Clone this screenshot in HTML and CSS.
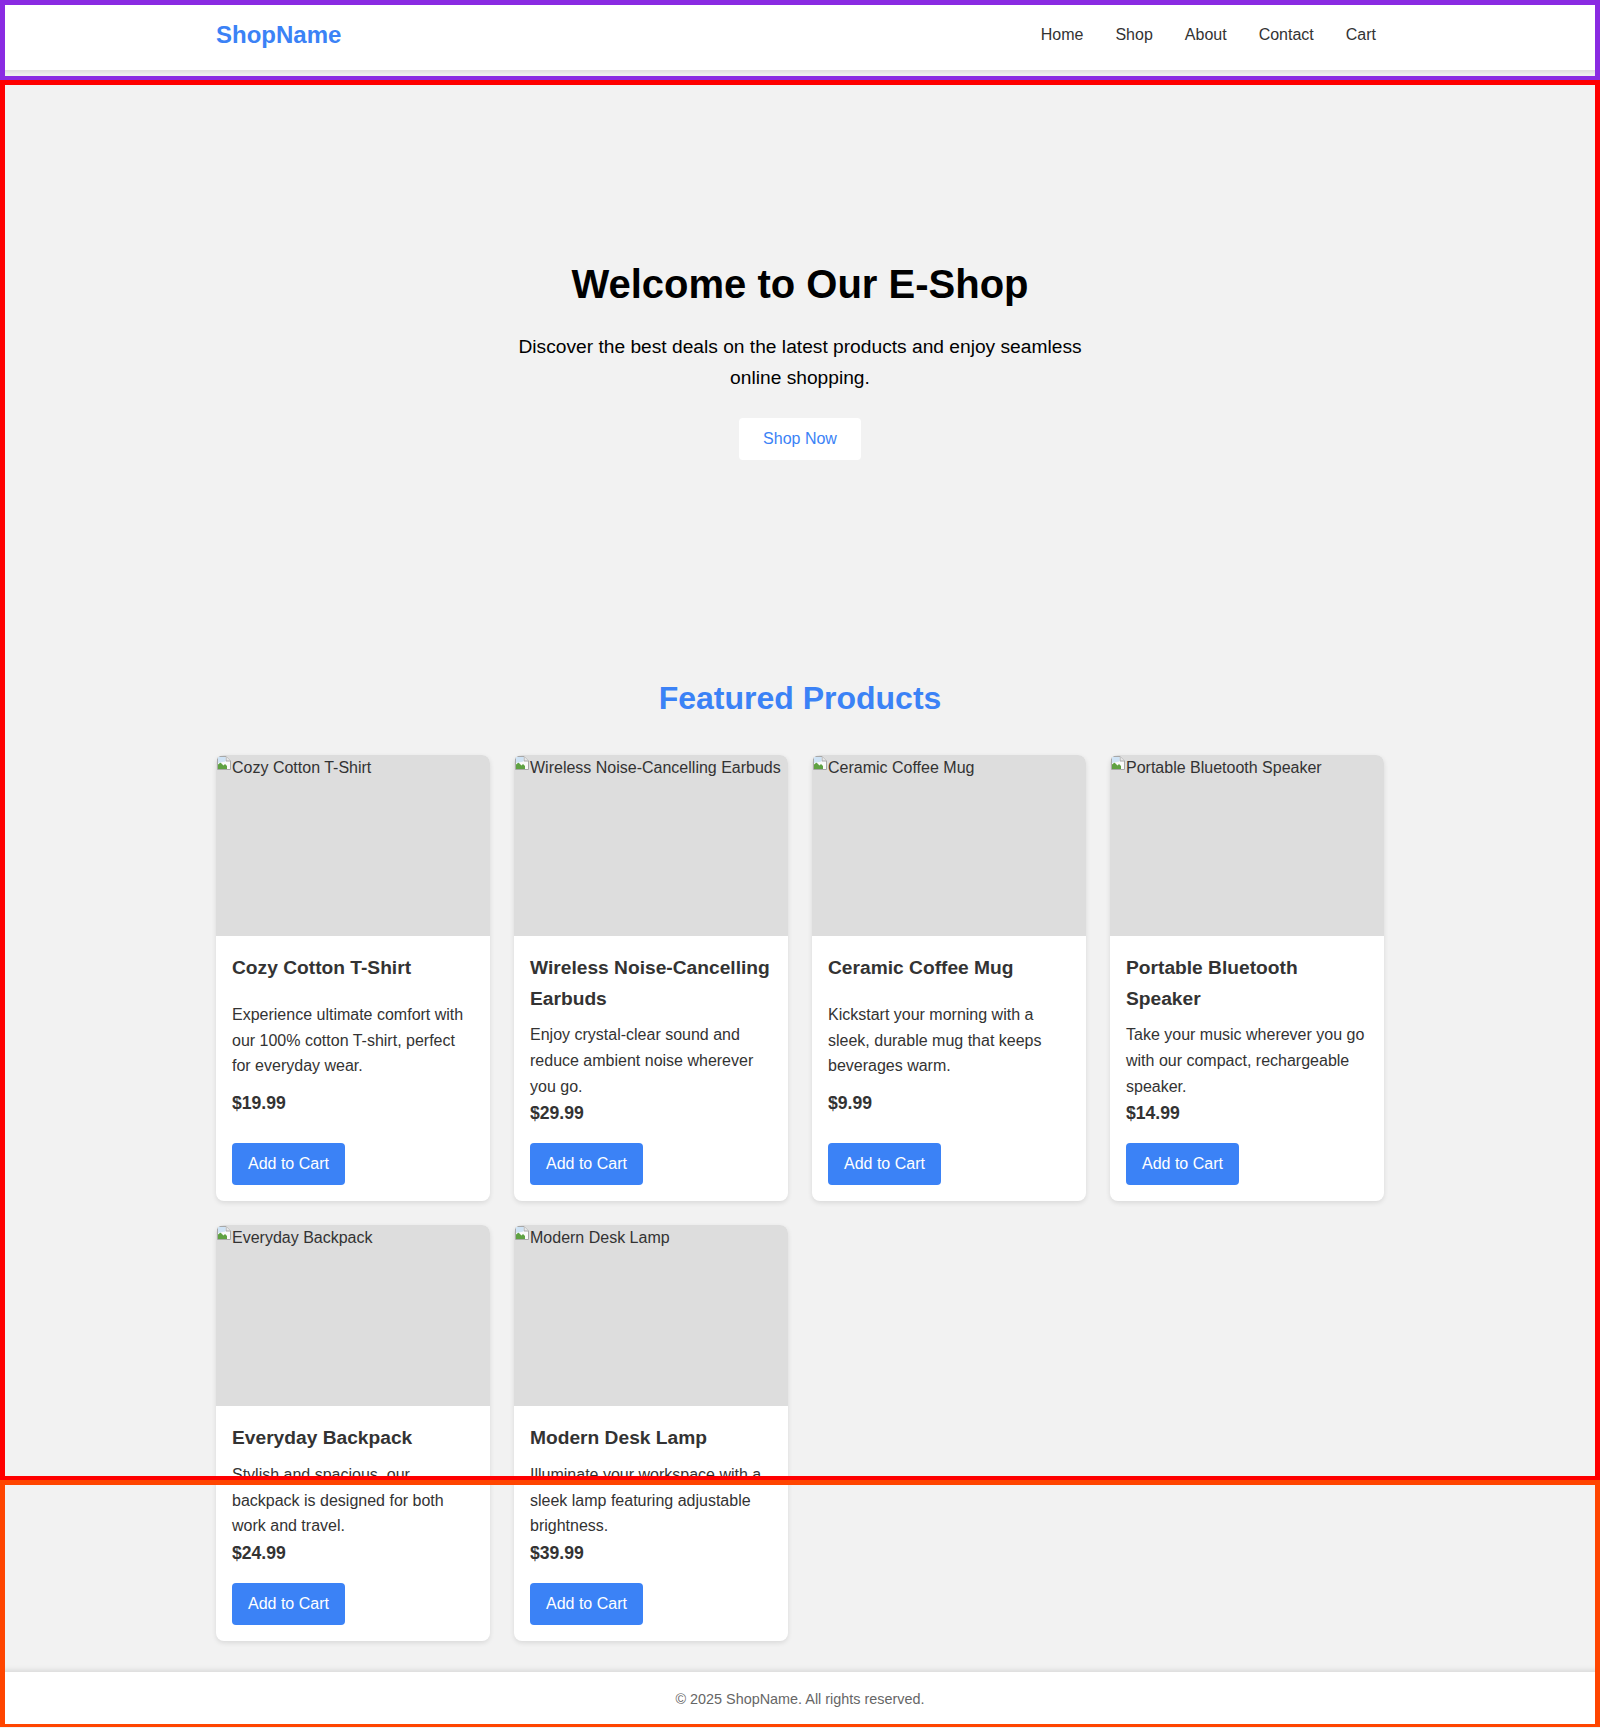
FILE: index.html
```html
<!DOCTYPE html>
<html lang="en">
<head>
<meta charset="utf-8">
<title>ShopName</title>
<link rel="stylesheet" href="styles.css">
</head>
<body>
<header class="site-header">
  <div class="container header-inner">
    <a class="logo" href="#">ShopName</a>
    <ul class="nav">
      <li><a href="#">Home</a></li>
      <li><a href="#">Shop</a></li>
      <li><a href="#">About</a></li>
      <li><a href="#">Contact</a></li>
      <li><a href="#">Cart</a></li>
    </ul>
  </div>
</header>

<section class="hero">
  <h1>Welcome to Our E-Shop</h1>
  <p>Discover the best deals on the latest products and enjoy seamless online shopping.</p>
  <button class="btn-hero">Shop Now</button>
</section>

<section class="products">
  <div class="container">
    <h2>Featured Products</h2>
    <div class="grid">
      <div class="card">
        <div class="card-img"><svg class="broken" width="16" height="16" viewBox="0 0 16 16"><path d="M1.5 1.5h8.5l4.5 4.5v8.5h-13z" fill="#fafafa" stroke="#a8a8a8"/><path d="M10 1.5v4.5h4.5" fill="#e8e8e8" stroke="#a8a8a8"/><path d="M2 14V9.5l2.5-2 3 3L9 9l2 2v3z" fill="#5fa243"/><path d="M2 2h7.5v4.5L2 8z" fill="#cfe3f5"/></svg><span>Cozy Cotton T-Shirt</span></div>
        <div class="card-body">
          <h3 class="card-title">Cozy Cotton T-Shirt</h3>
          <p class="card-desc">Experience ultimate comfort with our 100% cotton T-shirt, perfect for everyday wear.</p>
          <p class="card-price">$19.99</p>
          <button class="btn-cart">Add to Cart</button>
        </div>
      </div>
      <div class="card">
        <div class="card-img"><svg class="broken" width="16" height="16" viewBox="0 0 16 16"><path d="M1.5 1.5h8.5l4.5 4.5v8.5h-13z" fill="#fafafa" stroke="#a8a8a8"/><path d="M10 1.5v4.5h4.5" fill="#e8e8e8" stroke="#a8a8a8"/><path d="M2 14V9.5l2.5-2 3 3L9 9l2 2v3z" fill="#5fa243"/><path d="M2 2h7.5v4.5L2 8z" fill="#cfe3f5"/></svg><span>Wireless Noise-Cancelling Earbuds</span></div>
        <div class="card-body">
          <h3 class="card-title">Wireless Noise-Cancelling Earbuds</h3>
          <p class="card-desc">Enjoy crystal-clear sound and reduce ambient noise wherever you go.</p>
          <p class="card-price">$29.99</p>
          <button class="btn-cart">Add to Cart</button>
        </div>
      </div>
      <div class="card">
        <div class="card-img"><svg class="broken" width="16" height="16" viewBox="0 0 16 16"><path d="M1.5 1.5h8.5l4.5 4.5v8.5h-13z" fill="#fafafa" stroke="#a8a8a8"/><path d="M10 1.5v4.5h4.5" fill="#e8e8e8" stroke="#a8a8a8"/><path d="M2 14V9.5l2.5-2 3 3L9 9l2 2v3z" fill="#5fa243"/><path d="M2 2h7.5v4.5L2 8z" fill="#cfe3f5"/></svg><span>Ceramic Coffee Mug</span></div>
        <div class="card-body">
          <h3 class="card-title">Ceramic Coffee Mug</h3>
          <p class="card-desc">Kickstart your morning with a sleek, durable mug that keeps beverages warm.</p>
          <p class="card-price">$9.99</p>
          <button class="btn-cart">Add to Cart</button>
        </div>
      </div>
      <div class="card">
        <div class="card-img"><svg class="broken" width="16" height="16" viewBox="0 0 16 16"><path d="M1.5 1.5h8.5l4.5 4.5v8.5h-13z" fill="#fafafa" stroke="#a8a8a8"/><path d="M10 1.5v4.5h4.5" fill="#e8e8e8" stroke="#a8a8a8"/><path d="M2 14V9.5l2.5-2 3 3L9 9l2 2v3z" fill="#5fa243"/><path d="M2 2h7.5v4.5L2 8z" fill="#cfe3f5"/></svg><span>Portable Bluetooth Speaker</span></div>
        <div class="card-body">
          <h3 class="card-title">Portable Bluetooth Speaker</h3>
          <p class="card-desc">Take your music wherever you go with our compact, rechargeable speaker.</p>
          <p class="card-price">$14.99</p>
          <button class="btn-cart">Add to Cart</button>
        </div>
      </div>
      <div class="card">
        <div class="card-img"><svg class="broken" width="16" height="16" viewBox="0 0 16 16"><path d="M1.5 1.5h8.5l4.5 4.5v8.5h-13z" fill="#fafafa" stroke="#a8a8a8"/><path d="M10 1.5v4.5h4.5" fill="#e8e8e8" stroke="#a8a8a8"/><path d="M2 14V9.5l2.5-2 3 3L9 9l2 2v3z" fill="#5fa243"/><path d="M2 2h7.5v4.5L2 8z" fill="#cfe3f5"/></svg><span>Everyday Backpack</span></div>
        <div class="card-body">
          <h3 class="card-title">Everyday Backpack</h3>
          <p class="card-desc">Stylish and spacious, our backpack is designed for both work and travel.</p>
          <p class="card-price">$24.99</p>
          <button class="btn-cart">Add to Cart</button>
        </div>
      </div>
      <div class="card">
        <div class="card-img"><svg class="broken" width="16" height="16" viewBox="0 0 16 16"><path d="M1.5 1.5h8.5l4.5 4.5v8.5h-13z" fill="#fafafa" stroke="#a8a8a8"/><path d="M10 1.5v4.5h4.5" fill="#e8e8e8" stroke="#a8a8a8"/><path d="M2 14V9.5l2.5-2 3 3L9 9l2 2v3z" fill="#5fa243"/><path d="M2 2h7.5v4.5L2 8z" fill="#cfe3f5"/></svg><span>Modern Desk Lamp</span></div>
        <div class="card-body">
          <h3 class="card-title">Modern Desk Lamp</h3>
          <p class="card-desc">Illuminate your workspace with a sleek lamp featuring adjustable brightness.</p>
          <p class="card-price">$39.99</p>
          <button class="btn-cart">Add to Cart</button>
        </div>
      </div>
    </div>
  </div>
</section>

<footer class="site-footer">
  <p>&copy; 2025 ShopName. All rights reserved.</p>
</footer>

<div class="overlay ov-header"></div>
<div class="overlay ov-main"></div>
<div class="overlay ov-footer"></div>
</body>
</html>
```

FILE: styles.css
```css
* {
  box-sizing: border-box;
}

body {
  margin: 0;
  font-family: "Liberation Sans", Arial, sans-serif;
  line-height: 1.6;
  color: #333;
  background: #f2f2f2;
  position: relative;
}

.container {
  max-width: 1200px;
  margin: 0 auto;
  padding: 0 16px;
}

/* Header */
.site-header {
  background: #fff;
  box-shadow: 0 2px 5px rgba(0, 0, 0, 0.1);
  padding: 16px 0;
  position: relative;
  z-index: 1;
}

.header-inner {
  display: flex;
  justify-content: space-between;
  align-items: center;
}

.logo {
  font-size: 24px;
  font-weight: bold;
  color: #3b82f6;
  text-decoration: none;
}

.nav {
  display: flex;
  gap: 16px;
  list-style: none;
  margin: 0;
  padding: 0;
}

.nav a {
  color: #333;
  text-decoration: none;
  padding: 8px;
}

/* Hero */
.hero {
  text-align: center;
  padding: 182px 16px 181px;
  color: #000;
}

.hero h1 {
  font-size: 40px;
  line-height: 1.6;
  margin: 0 0 16px;
}

.hero p {
  font-size: 19.2px;
  max-width: 600px;
  margin: 0 auto 24px;
}

.btn-hero {
  display: inline-block;
  background: #fff;
  color: #3b82f6;
  border: none;
  border-radius: 4px;
  padding: 12px 24px;
  font-family: "Liberation Sans", Arial, sans-serif;
  font-size: 16px;
  line-height: normal;
  cursor: pointer;
}

/* Products */
.products {
  padding: 32px 0 31px;
}

.products h2 {
  text-align: center;
  color: #3b82f6;
  font-size: 32px;
  line-height: 1.6;
  margin: 0 0 31px;
}

.grid {
  display: grid;
  grid-template-columns: repeat(4, 1fr);
  gap: 24px;
}

.card {
  background: #fff;
  border-radius: 8px;
  box-shadow: 0 2px 5px rgba(0, 0, 0, 0.1);
  overflow: hidden;
  display: flex;
  flex-direction: column;
}

.card-img {
  height: 181px;
  background: #ddd;
  display: flex;
  align-items: flex-start;
  font-size: 16px;
  color: #333;
  white-space: nowrap;
  overflow: hidden;
}

.broken {
  flex: none;
  display: block;
}

.card-body {
  padding: 17px 16px 16px;
  display: flex;
  flex-direction: column;
  justify-content: space-between;
  flex: 1;
}

.card-title {
  font-size: 19.2px;
  line-height: 1.6;
  margin: 0 0 8px;
}

.card-desc {
  margin: 0;
  font-size: 16px;
}

.card-price {
  margin: 0;
  font-size: 17.6px;
  font-weight: bold;
}

.btn-cart {
  align-self: flex-start;
  margin-top: 16px;
  background: #3b82f6;
  color: #fff;
  border: none;
  border-radius: 4px;
  padding: 12px 16px;
  font-family: "Liberation Sans", Arial, sans-serif;
  font-size: 16px;
  line-height: normal;
  cursor: pointer;
}

/* Footer */
.site-footer {
  background: #fff;
  box-shadow: 0 -2px 5px rgba(0, 0, 0, 0.1);
  text-align: center;
  padding: 16px;
  font-size: 14.4px;
  color: #666;
}

.site-footer p {
  margin: 0;
}

/* Region outlines laid over the page */
.overlay {
  position: absolute;
  left: 0;
  width: 100%;
  border-style: solid;
  pointer-events: none;
  z-index: 10;
}

.ov-header {
  top: 0;
  height: 80px;
  border-color: #8a2be2;
  border-width: 5px 5px 4px 5px;
}

.ov-main {
  top: 80px;
  height: 1400px;
  border-color: #ff0000;
  border-width: 5px 5px 4px 5px;
}

.ov-footer {
  top: 1480px;
  height: 248px;
  border-color: #ff4500;
  border-width: 5px 5px 4px 5px;
}
```
